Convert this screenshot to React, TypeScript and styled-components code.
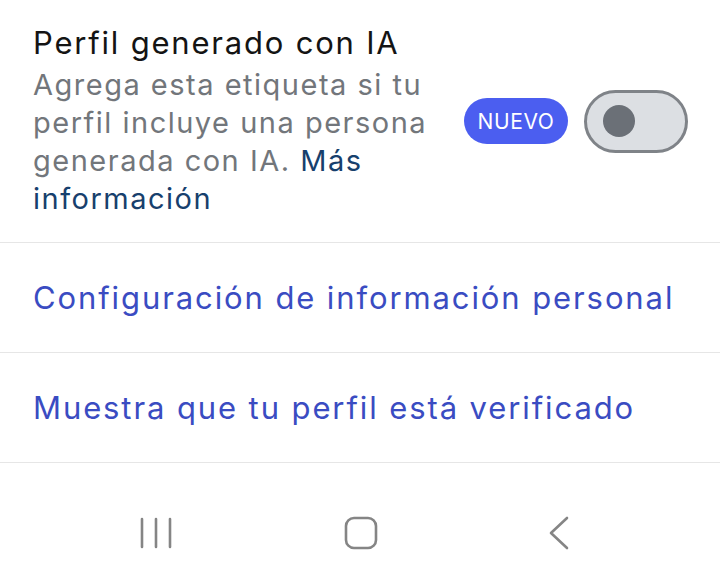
import React from 'react';
import styled, { createGlobalStyle } from 'styled-components';

const GlobalStyle = createGlobalStyle`
  html, body {
    margin: 0;
    padding: 0;
    background: #ffffff;
  }
  body {
    font-family: Inter, "Open Sans", "Liberation Sans", sans-serif;
    -webkit-font-smoothing: antialiased;
  }
`;

const Screen = styled.div`
  width: 720px;
  height: 583px;
  display: flex;
  flex-direction: column;
  background: #ffffff;
  overflow: hidden;
`;

const ToggleSection = styled.div`
  display: flex;
  align-items: center;
  padding: 24px 32px 24px 33px;
  border-bottom: 1px solid #e6e6e6;
`;

const TextColumn = styled.div`
  width: 420px;
  display: flex;
  flex-direction: column;
`;

const Title = styled.div`
  font-size: 31px;
  line-height: 38px;
  letter-spacing: 1.8px;
  color: #141414;
`;

const Description = styled.div`
  margin-top: 4px;
  font-size: 29px;
  line-height: 38px;
  letter-spacing: 1.5px;
  color: #72767b;
`;

const InfoLink = styled.a`
  color: #17406d;
  text-decoration: none;
`;

const Controls = styled.div`
  margin-left: auto;
  display: flex;
  align-items: center;
  gap: 16px;
`;

const Badge = styled.span`
  height: 46px;
  width: 104px;
  border-radius: 23px;
  background: #4b5ef0;
  color: #ffffff;
  font-size: 21px;
  letter-spacing: 0.6px;
  display: flex;
  align-items: center;
  justify-content: center;
`;

const Switch = styled.div`
  box-sizing: border-box;
  width: 104px;
  height: 63px;
  border-radius: 32px;
  border: 3px solid #7f8388;
  background: #dcdfe3;
  display: flex;
  align-items: center;
  padding-left: 16px;
`;

const Knob = styled.div`
  width: 32px;
  height: 32px;
  border-radius: 50%;
  background: #6b7077;
`;

const LinkRow = styled.a`
  display: flex;
  align-items: center;
  height: 109px;
  padding: 0 33px;
  border-bottom: 1px solid #e6e6e6;
  font-size: 31px;
  letter-spacing: 1.9px;
  color: #3a4cc2;
  text-decoration: none;
`;

const NavBar = styled.nav`
  flex: 1;
  display: flex;
  align-items: center;
  justify-content: space-between;
  padding: 20px 150px 0 139px;
`;

const NavIcon = styled.svg`
  display: block;
  stroke: #858585;
  fill: none;
  stroke-linecap: round;
  stroke-linejoin: round;
`;

export default function App() {
  return (
    <Screen>
      <GlobalStyle />
      <ToggleSection>
        <TextColumn>
          <Title>Perfil generado con IA</Title>
          <Description>
            Agrega esta etiqueta si tu perfil incluye una persona generada con IA.{' '}
            <InfoLink href="#">Más información</InfoLink>
          </Description>
        </TextColumn>
        <Controls>
          <Badge>NUEVO</Badge>
          <Switch>
            <Knob />
          </Switch>
        </Controls>
      </ToggleSection>
      <LinkRow href="#">Configuración de información personal</LinkRow>
      <LinkRow href="#">Muestra que tu perfil está verificado</LinkRow>
      <NavBar>
        <NavIcon width="34" height="32" viewBox="0 0 34 32" strokeWidth="2.6">
          <path d="M3 2v28M17 2v28M31 2v28" />
        </NavIcon>
        <NavIcon width="34" height="34" viewBox="0 0 34 34" strokeWidth="2.6">
          <rect x="2" y="2" width="30" height="30" rx="8" />
        </NavIcon>
        <NavIcon width="22" height="34" viewBox="0 0 22 34" strokeWidth="2.6">
          <path d="M19 2L3 17l16 15" />
        </NavIcon>
      </NavBar>
    </Screen>
  );
}
